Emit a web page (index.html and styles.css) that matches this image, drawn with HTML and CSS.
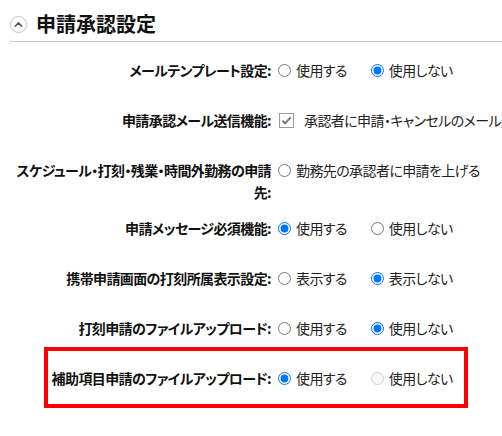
FILE: index.html
```html
<!DOCTYPE html>
<html lang="ja">
<head>
  <meta charset="UTF-8" />
  <title>申請承認設定</title>
  <link rel="stylesheet" href="styles.css">
</head>
<body>
  <div class="panel">
    <div class="panel-head">
      <span class="toggle-icon">
        <svg width="17" height="17" viewBox="0 0 17 17">
          <circle cx="8.5" cy="8.5" r="8" fill="#fff" stroke="#c4c4c4" stroke-width="1"/>
          <path d="M5.2 10.2 L8.5 6.9 L11.8 10.2" fill="none" stroke="#555" stroke-width="1.6" stroke-linecap="round" stroke-linejoin="round"/>
        </svg>
      </span>
      <h2>申請承認設定</h2>
    </div>

    <div class="row">
      <div class="row-label">メールテンプレート設定:</div>
      <div class="row-field">
        <label class="opt"><input type="radio" name="tpl">使用する</label>
        <label class="opt"><input type="radio" name="tpl" checked>使用しない</label>
      </div>
    </div>

    <div class="row">
      <div class="row-label">申請承認メール送信機能:</div>
      <div class="row-field">
        <label class="opt opt-check">
          <span class="checkbox">
            <svg width="11" height="11" viewBox="0 0 11 11"><path d="M1.5 5.8 L4.2 8.4 L9.6 2.4" fill="none" stroke="#777" stroke-width="2"/></svg>
          </span>承認者に申請・キャンセルのメール通
        </label>
      </div>
    </div>

    <div class="row row-wrap">
      <div class="row-label">スケジュール・打刻・残業・時間外勤務の申請先:</div>
      <div class="row-field">
        <label class="opt"><input type="radio" name="dest">勤務先の承認者に申請を上げる</label>
      </div>
    </div>

    <div class="row">
      <div class="row-label">申請メッセージ必須機能:</div>
      <div class="row-field">
        <label class="opt"><input type="radio" name="msg" checked>使用する</label>
        <label class="opt"><input type="radio" name="msg">使用しない</label>
      </div>
    </div>

    <div class="row">
      <div class="row-label">携帯申請画面の打刻所属表示設定:</div>
      <div class="row-field">
        <label class="opt"><input type="radio" name="mobile">表示する</label>
        <label class="opt"><input type="radio" name="mobile" checked>表示しない</label>
      </div>
    </div>

    <div class="row">
      <div class="row-label">打刻申請のファイルアップロード:</div>
      <div class="row-field">
        <label class="opt"><input type="radio" name="punch">使用する</label>
        <label class="opt"><input type="radio" name="punch" checked>使用しない</label>
      </div>
    </div>

    <div class="row highlight">
      <div class="row-label">補助項目申請のファイルアップロード:</div>
      <div class="row-field">
        <label class="opt"><input type="radio" name="sub" checked>使用する</label>
        <label class="opt"><input type="radio" name="sub" disabled>使用しない</label>
      </div>
    </div>
  </div>
</body>
</html>
```

FILE: styles.css
```css
* {
  box-sizing: border-box;
}
body {
  margin: 0;
  background: #fff;
  color: #222;
  font-family: "Noto Sans CJK JP", "Noto Sans", sans-serif;
  font-size: 14px;
  font-feature-settings: "palt";
  letter-spacing: -0.6px;
  overflow: hidden;
}
.panel-head {
  display: flex;
  align-items: center;
  gap: 9px;
  height: 42px;
  margin-left: 10px;
  padding-top: 7px;
  border-bottom: 1px solid #c8c8c8;
}
.toggle-icon {
  display: flex;
}
.panel-head h2 {
  margin: 0;
  font-size: 20px;
  font-weight: bold;
  color: #111;
  line-height: 1;
  letter-spacing: 0;
}
.panel {
  padding-bottom: 20px;
}
.row {
  display: flex;
  align-items: flex-start;
  padding: 14px 0;
  line-height: 22px;
  position: relative;
}
.panel-head + .row {
  margin-top: 3px;
}
.row-wrap {
  padding-bottom: 0;
}
.row-label {
  flex-shrink: 0;
  width: 271px;
  padding-left: 8px;
  text-align: right;
  font-weight: bold;
  color: #111;
}
.row-field {
  flex: 1;
  min-width: 0;
  display: flex;
  align-items: center;
  padding-left: 7px;
  white-space: nowrap;
  overflow: hidden;
}
.opt {
  display: flex;
  align-items: center;
  margin-right: 24px;
}
.opt input {
  margin: 0 5px 0 0;
  width: 13px;
  height: 13px;
}
.opt-check {
  margin-right: 0;
}
.checkbox {
  display: flex;
  align-items: center;
  justify-content: center;
  width: 15px;
  height: 15px;
  margin: 0 10px 0 1px;
  border: 1px solid #9a9a9a;
  background: #fff;
}
.highlight::after {
  content: "";
  position: absolute;
  left: 44px;
  right: 34px;
  top: -6px;
  bottom: -5px;
  border: 4px solid #ff0000;
}
```
